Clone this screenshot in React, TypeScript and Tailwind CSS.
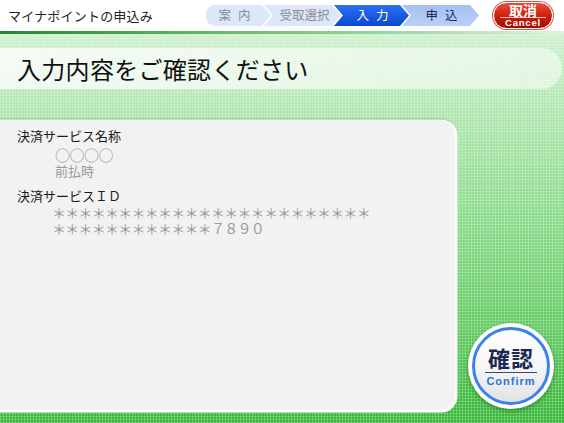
import React from 'react';

const jp = "font-['Noto_Sans_CJK_JP','Noto_Sans',sans-serif]";

const chevron =
  '[clip-path:polygon(0_0,calc(100%_-_9px)_0,100%_50%,calc(100%_-_9px)_100%,0_100%,9px_50%)]';
const chevronFirst =
  '[clip-path:polygon(0_0,calc(100%_-_9px)_0,100%_50%,calc(100%_-_9px)_100%,0_100%)]';

function Steps() {
  return (
    <div className={`flex h-[21px] text-[12.5px] leading-none ${jp}`}>
      <div className={`${chevronFirst} w-[65px] rounded-l-[9px] bg-[#dce7fa] text-[#8c8c8c] flex items-center justify-center gap-[7px] pr-[8px]`}>
        <span>案</span>
        <span>内</span>
      </div>
      <div className={`${chevron} -ml-[7px] w-[77px] bg-[#dce7fa] text-[#8c8c8c] flex items-center justify-center pl-[4px]`}>
        受取選択
      </div>
      <div className={`${chevron} -ml-[7px] w-[75px] bg-[linear-gradient(to_bottom,#2b70f2,#0b47d2)] text-white flex items-center justify-center gap-[7px] pl-[2px]`}>
        <span>入</span>
        <span>力</span>
      </div>
      <div className={`${chevron} -ml-[7px] w-[77px] bg-[linear-gradient(to_bottom,#a3c1f2,#b8d0f6)] text-[#1c2c58] flex items-center justify-center gap-[7px] pl-[2px]`}>
        <span>申</span>
        <span>込</span>
      </div>
    </div>
  );
}

function CancelButton() {
  return (
    <button className="w-[60px] h-[27px] rounded-full border-[1.5px] border-white bg-[linear-gradient(to_bottom,#f04a36,#c51a08_60%,#a01000)] shadow-[0_0_0_1px_#e05040] flex flex-col items-center justify-center text-white">
      <span className={`text-[14px] font-bold leading-[14px] ${jp}`}>取消</span>
      <span className="w-[46px] h-px bg-white/70" />
      <span className="text-[9.5px] font-bold leading-[10px] tracking-[0.8px] font-['Liberation_Sans',sans-serif]">
        Cancel
      </span>
    </button>
  );
}

function ConfirmButton() {
  return (
    <button className="w-[86px] h-[86px] rounded-full bg-white shadow-[0_2px_4px_rgba(0,80,0,0.45)] flex items-center justify-center">
      <div className="w-[78px] h-[78px] rounded-full border-[3px] border-[#3a80f0] bg-[linear-gradient(to_bottom,#ffffff,#f4f4f4_55%,#e2e2e2)] flex flex-col items-center justify-center">
        <span className={`text-[22px] font-bold leading-[24px] text-[#1c2852] tracking-[1px] ${jp}`}>確認</span>
        <span className="w-[52px] h-[1.5px] bg-[#3a4a70] mt-[3px] mb-[2px]" />
        <span className="text-[11px] font-bold leading-[12px] text-[#2d6fe0] tracking-[1px] font-['Liberation_Sans',sans-serif]">
          Confirm
        </span>
      </div>
    </button>
  );
}

export default function App() {
  return (
    <div className={`w-[564px] h-[423px] overflow-hidden flex flex-col bg-white ${jp}`}>
      {/* header */}
      <div className="h-[31px] flex items-center pl-[8px] pr-[11px] shrink-0">
        <span className="text-[13px] text-[#222] tracking-[0.2px]">マイナポイントの申込み</span>
        <div className="ml-[53px]">
          <Steps />
        </div>
        <div className="ml-auto">
          <CancelButton />
        </div>
      </div>
      <div className="h-[3px] shrink-0 bg-[linear-gradient(to_right,#23843a,#5cb860_35%,#a8dcaa_75%,#dff3df)]" />

      {/* body */}
      <div className="flex-1 flex flex-col [background-image:repeating-linear-gradient(90deg,rgba(255,255,255,0.22)_0_1px,transparent_1px_3px),repeating-linear-gradient(0deg,rgba(255,255,255,0.22)_0_1px,transparent_1px_3px),linear-gradient(to_bottom,#cdefcd_0%,#a8e4a8_25%,#85d985_50%,#62cb62_75%,#36b636_100%)]">
        <div className="mt-[14px] h-[41px] w-[562px] rounded-r-full bg-[linear-gradient(to_right,rgba(255,255,255,0.78),rgba(255,255,255,0.5))] flex items-center pl-[17px]">
          <h1 className="text-[24px] text-[#111] leading-none tracking-[0.3px]">入力内容をご確認ください</h1>
        </div>

        <div className="mt-[31px] flex items-end pb-[13px]">
          <div className="w-[455px] h-[290px] bg-[#f2f2f2] rounded-r-[15px] shadow-[1px_1px_0_1.5px_#ffffff,0_0_2px_1px_rgba(90,110,90,0.6)] pt-[6px] pl-[17px]">
            <div className="text-[13px] leading-[19px] text-[#1a1a1a]">決済サービス名称</div>
            <div className="pl-[38px] mt-[1px] text-[#9a9a9a]">
              <div className="text-[15px] leading-[17px] tracking-[-0.5px]">○○○○</div>
              <div className="text-[13px] leading-[16px]">前払時</div>
            </div>
            <div className="mt-[7px] text-[13px] leading-[19px] text-[#1a1a1a]">決済サービスＩＤ</div>
            <div className="pl-[35px] text-[14px] leading-[15.5px] tracking-[-0.75px] text-[#9a9a9a]">
              <div>＊＊＊＊＊＊＊＊＊＊＊＊＊＊＊＊＊＊＊＊＊＊＊＊</div>
              <div>＊＊＊＊＊＊＊＊＊＊＊＊７８９０</div>
            </div>
          </div>
          <div className="ml-[13px] mb-[1px]">
            <ConfirmButton />
          </div>
        </div>
      </div>
    </div>
  );
}
